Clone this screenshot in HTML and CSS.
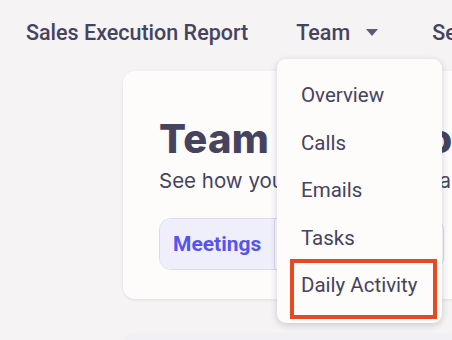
FILE: index.html
```html
<!DOCTYPE html>
<html lang="en">
<head>
    <meta charset="UTF-8">
    <title>Team</title>
    <link rel="stylesheet" href="styles.css">
</head>
<body>

<nav class="topnav">
    <span class="navItem">Sales Execution Report</span>
    <span class="navItem navTeam">Team <span class="caret"></span></span>
    <span class="navItem">Sequences</span>
</nav>

<main class="page">
    <section class="card">
        <h1 class="title">Team Execution</h1>
        <p class="subtitle">See how your team's agents are performing</p>
        <div class="tabs">
            <div class="tab active">Meetings</div>
            <div class="tab">Calls</div>
        </div>
    </section>
    <section class="card nextCard"></section>
</main>

<div class="dropdown">
    <ul class="menu">
        <li>Overview</li>
        <li>Calls</li>
        <li>Emails</li>
        <li>Tasks</li>
        <li>Daily Activity</li>
    </ul>
    <div class="highlight"></div>
</div>

</body>
</html>
```

FILE: styles.css
```css
body {
    margin: 0;
    background: #f5f3f3;
    font-family: Roboto, "Liberation Sans", sans-serif;
    color: #46435f;
    overflow: hidden;
}

.topnav {
    display: flex;
    align-items: center;
    height: 64px;
    padding-left: 26px;
    white-space: nowrap;
}

.navItem {
    font-size: 21.5px;
    font-weight: 500;
    margin-right: 48px;
}

.navTeam {
    display: flex;
    align-items: center;
    margin-right: 54px;
}

.caret {
    display: inline-block;
    margin-left: 16px;
    width: 0;
    height: 0;
    border-left: 6px solid transparent;
    border-right: 6px solid transparent;
    border-top: 7px solid #5e5b76;
}

.page {
    padding-left: 123px;
    padding-top: 7px;
}

.card {
    width: 420px;
    height: 228px;
    background: #fdfcfb;
    border-radius: 12px;
    box-shadow: 0 1px 3px rgba(60, 50, 80, 0.1);
    padding: 0 36px;
    box-sizing: border-box;
    white-space: nowrap;
    overflow: hidden;
}

.nextCard {
    margin-top: 35px;
    background: #f1f0f5;
}

.title {
    margin: 0;
    padding-top: 44px;
    font-family: Inter, sans-serif;
    font-size: 40px;
    font-weight: 800;
    line-height: 48px;
    letter-spacing: 0.3px;
}

.subtitle {
    margin: 5px 0 0;
    font-family: Inter, sans-serif;
    font-size: 20.5px;
    line-height: 25px;
}

.tabs {
    display: flex;
    margin-top: 25px;
    width: 285px;
    height: 52px;
    border: 1px solid #dcdbe6;
    border-radius: 12px;
    box-sizing: border-box;
}

.tab {
    padding: 0 13px;
    font-size: 21px;
    font-weight: 700;
    line-height: 50px;
    border-right: 1px solid #dcdbe6;
}

.tab.active {
    color: #5853ee;
    background: #efeffc;
    border-radius: 12px 0 0 12px;
}

.dropdown {
    position: absolute;
    left: 277px;
    top: 59px;
    width: 165px;
    height: 264px;
    background: #fdfcfb;
    border-radius: 9px;
    box-shadow: 0 2px 7px rgba(40, 30, 70, 0.2);
}

.menu {
    list-style: none;
    margin: 0;
    padding: 13px 0 0 24px;
}

.menu li {
    font-size: 20.5px;
    line-height: 47.5px;
}

.highlight {
    position: absolute;
    left: 13px;
    top: 200px;
    width: 147px;
    height: 60px;
    border: 4px solid #e9491f;
    box-sizing: border-box;
}
```
